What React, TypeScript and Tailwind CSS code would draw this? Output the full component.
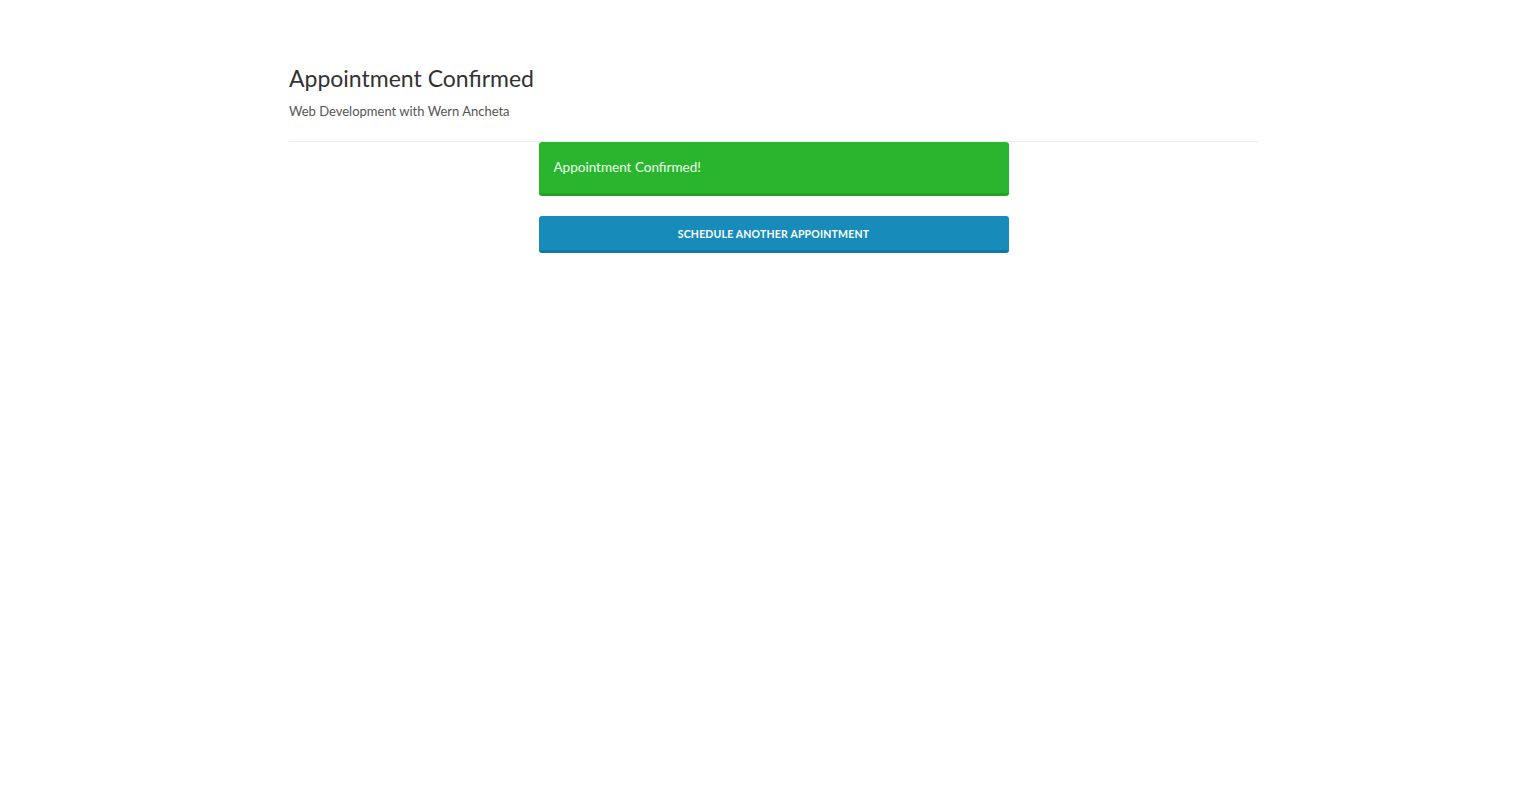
const App = () => {
  return (
    <div className="min-h-screen bg-white font-['Lato','Noto_Sans',sans-serif] text-[#333]">
      <div className="ml-[289px] w-[969px] pt-[62px]">
        <h1 className="text-[23px] leading-[32px] font-normal text-[#333]">Appointment Confirmed</h1>
        <p className="mt-[8px] text-[13px] leading-[18px] text-[#555]">Web Development with Wern Ancheta</p>
        <hr className="mt-[21px] border-t border-[#eeeeee]" />
        <div className="mx-auto w-[470px]">
          <div className="rounded-[3px] border-b-[3px] border-[#23a228] bg-[#29b62e] px-[15px] pt-[16px] pb-[17px] text-[13.5px] leading-[18px] text-[#f0fff0]">
            Appointment Confirmed!
          </div>
          <button className="mt-[20px] block h-[37px] w-full rounded-[3px] border-b-[3px] border-[#12789f] bg-[#178cba] pt-[3px] text-center text-[10.5px] font-bold uppercase tracking-[0.2px] text-white">
            Schedule another appointment
          </button>
        </div>
      </div>
    </div>
  );
};

export default App;
